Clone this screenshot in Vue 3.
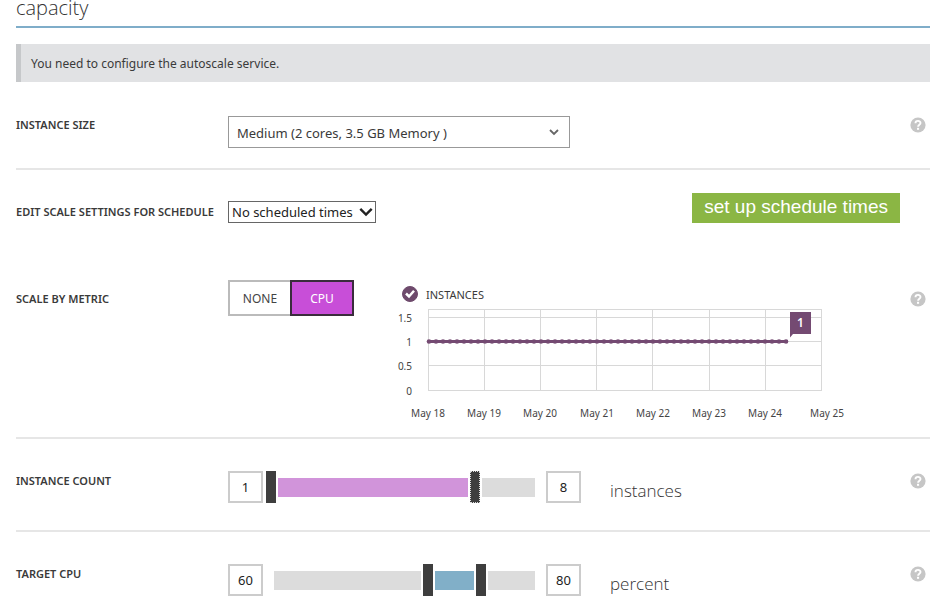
<script setup>
import { ref, computed } from 'vue'

const size = ref('medium')
const schedule = ref('none')
const metric = ref('CPU')
const showInstances = ref(true)

const count = ref({ low: 1, high: 8 })
const cpu = ref({ low: 60, high: 80 })

const sliders = computed(() => [
  { id: 'count', label: 'Instance count', unit: 'instances', tone: 'violet', min: 1, max: 10, model: count.value, active: true },
  { id: 'cpu', label: 'Target CPU', unit: 'percent', tone: 'blue', min: 0, max: 100, model: cpu.value, active: false }
])

function percent(slider, value) {
  return ((value - slider.min) / (slider.max - slider.min)) * 100
}

function fillStyle(slider) {
  const from = percent(slider, slider.model.low)
  const to = percent(slider, slider.model.high)
  return { marginLeft: from + '%', width: to - from + '%' }
}

const days = [18, 19, 20, 21, 22, 23, 24, 25].map((d, i) => ({
  text: 'May ' + d,
  line: Math.floor(38 + i * 56.2) + 0.5,
  x: d === 25 ? 437 : Math.round(38 + i * 56.2)
}))
const levels = [
  { text: '1.5', y: 14 },
  { text: '1', y: 38 },
  { text: '0.5', y: 62 },
  { text: '0', y: 87 }
]
const points = Array.from({ length: 52 }, (_, i) => 39 + i * 7)
</script>

<template>
  <main class="page">
    <h1 class="title">capacity</h1>
    <p class="notice">You need to configure the autoscale service.</p>

    <section class="row size-row">
      <label class="name" for="size">Instance size</label>
      <div class="field">
        <span class="picker large">
          <select id="size" v-model="size">
            <option value="medium">Medium (2 cores, 3.5 GB Memory )</option>
            <option value="small">Small (1 core, 1.75 GB Memory )</option>
          </select>
          <svg class="arrow" width="10" height="8" viewBox="0 0 10 8" aria-hidden="true">
            <path d="M1 2 L5 6 L9 2" fill="none" stroke="#666" stroke-width="1.8" />
          </svg>
        </span>
      </div>
      <button class="help" type="button" aria-label="Help">
        <svg width="16" height="16" viewBox="0 0 16 16"><circle cx="8" cy="8" r="7.6" fill="#c6c6c6" /><path d="M5.5 6.2 C5.5 3.2 10.5 3.2 10.5 6 C10.5 7.8 8.1 7.7 8.1 9.7" fill="none" stroke="#fff" stroke-width="1.9" /><rect x="7" y="10.8" width="2.1" height="2" fill="#fff" /></svg>
      </button>
    </section>

    <section class="row schedule-row">
      <label class="name" for="schedule">Edit scale settings for schedule</label>
      <div class="field spread">
        <span class="picker compact">
          <select id="schedule" v-model="schedule">
            <option value="none">No scheduled times</option>
          </select>
          <svg class="arrow" width="14" height="10" viewBox="0 0 14 10" aria-hidden="true">
            <path d="M1.3 1.8 L7 7.5 L12.7 1.8" fill="none" stroke="#222" stroke-width="2.4" />
          </svg>
        </span>
        <button class="setup" type="button">set up schedule times</button>
      </div>
    </section>

    <section class="row metric-row">
      <span class="name">Scale by metric</span>
      <div class="field">
        <div class="toggle">
          <button
            v-for="m in ['NONE', 'CPU']"
            :key="m"
            type="button"
            :class="{ on: metric === m }"
            :aria-pressed="metric === m"
            @click="metric = m"
          >{{ m }}</button>
        </div>
        <div class="chart">
          <label class="legend">
            <span class="tick">
              <input v-model="showInstances" type="checkbox" />
              <svg v-if="showInstances" width="16" height="16" viewBox="0 0 16 16" aria-hidden="true">
                <path d="M4 7.5 L7 10.5 L12 4.8" fill="none" stroke="#fff" stroke-width="2.5" />
              </svg>
            </span>
            INSTANCES
          </label>
          <svg class="plot" width="460" height="120" viewBox="0 0 460 120">
            <g fill="none" stroke="#d8d8d8">
              <path d="M38 5.5 H432" />
              <line v-for="l in levels" :key="l.text" x1="38" x2="432" :y1="l.y - 0.5" :y2="l.y - 0.5" />
              <line v-for="d in days" :key="d.text" :x1="d.line" :x2="d.line" y1="5" y2="87" />
            </g>
            <g class="axis" text-anchor="end">
              <text v-for="l in levels" :key="l.text" x="22" :y="l.y + 4">{{ l.text }}</text>
            </g>
            <g class="axis" text-anchor="middle">
              <text v-for="d in days" :key="d.text" :x="d.x" y="113">{{ d.text }}</text>
            </g>
            <g v-if="showInstances" fill="#744a72">
              <rect x="38" y="36" width="360" height="3" />
              <circle v-for="p in points" :key="p" :cx="p" cy="37.5" r="2.3" />
              <path d="M400 8 H421 V30 H403 L400 33.5 Z" />
              <text class="flag" x="410.5" y="23" text-anchor="middle">1</text>
            </g>
          </svg>
        </div>
      </div>
      <button class="help" type="button" aria-label="Help">
        <svg width="16" height="16" viewBox="0 0 16 16"><circle cx="8" cy="8" r="7.6" fill="#c6c6c6" /><path d="M5.5 6.2 C5.5 3.2 10.5 3.2 10.5 6 C10.5 7.8 8.1 7.7 8.1 9.7" fill="none" stroke="#fff" stroke-width="1.9" /><rect x="7" y="10.8" width="2.1" height="2" fill="#fff" /></svg>
      </button>
    </section>

    <section v-for="s in sliders" :key="s.id" class="row slider-row">
      <label class="name" :for="s.id + '-low'">{{ s.label }}</label>
      <div class="field">
        <input :id="s.id + '-low'" v-model.number="s.model.low" class="number" type="text" />
        <div class="slider">
          <div class="track"><div class="range"><div class="fill" :class="s.tone" :style="fillStyle(s)"></div></div></div>
          <input v-model.number="s.model.low" type="range" :min="s.min" :max="s.max" :aria-label="s.label + ' minimum'" />
          <input v-model.number="s.model.high" type="range" :class="{ active: s.active }" :min="s.min" :max="s.max" :aria-label="s.label + ' maximum'" />
        </div>
        <input v-model.number="s.model.high" class="number" type="text" :aria-label="s.label + ' maximum value'" />
        <span class="unit">{{ s.unit }}</span>
      </div>
      <button class="help" type="button" aria-label="Help">
        <svg width="16" height="16" viewBox="0 0 16 16"><circle cx="8" cy="8" r="7.6" fill="#c6c6c6" /><path d="M5.5 6.2 C5.5 3.2 10.5 3.2 10.5 6 C10.5 7.8 8.1 7.7 8.1 9.7" fill="none" stroke="#fff" stroke-width="1.9" /><rect x="7" y="10.8" width="2.1" height="2" fill="#fff" /></svg>
      </button>
    </section>
  </main>
</template>

<style>
body {
  background: #fff;
}
</style>

<style scoped>
.page {
  padding: 0 6px 0 16px;
  font-family: "Noto Sans", "Open Sans", sans-serif;
  font-size: 13px;
  color: #3a3a3a;
}
.page *,
.page {
  box-sizing: border-box;
}
button,
input,
select {
  font: inherit;
  color: inherit;
  margin: 0;
}
.title {
  margin: 0;
  padding-bottom: 10px;
  border-bottom: 2px solid #7fadc9;
  font-family: "Open Sans", sans-serif;
  font-size: 20px;
  line-height: 16px;
  font-weight: 300;
  color: #333;
}
.notice {
  margin: 16px 0 0;
  padding: 11px 10px 9px;
  border-left: 5px solid #c6c8ca;
  background: #e1e2e4;
  font-size: 12px;
  line-height: 18px;
}
.row {
  display: grid;
  grid-template-columns: 212px 1fr 20px;
  align-items: start;
  border-bottom: 2px solid #e6e6e6;
}
.name {
  font-size: 11px;
  line-height: 16px;
  font-weight: 600;
  text-transform: uppercase;
  white-space: nowrap;
}
.field {
  display: flex;
  align-items: flex-start;
  min-width: 0;
}
.spread {
  justify-content: space-between;
}
.help {
  width: 16px;
  height: 16px;
  padding: 0;
  border: 0;
  background: none;
}
.help svg {
  display: block;
}
.size-row {
  padding: 34px 0 20px;
}
.size-row .name,
.size-row .help {
  margin-top: 1px;
}
.picker {
  display: grid;
  align-items: center;
}
.picker select,
.picker .arrow {
  grid-area: 1 / 1;
}
.picker select {
  appearance: none;
  border: 1px solid #999;
  border-radius: 0;
  background: #fff;
}
.picker .arrow {
  justify-self: end;
  pointer-events: none;
}
.large {
  width: 342px;
}
.large select {
  height: 32px;
  padding: 2px 8px 0;
}
.large .arrow {
  margin-right: 11px;
}
.compact {
  width: 148px;
  margin-top: 8px;
}
.compact select {
  height: 22px;
  padding: 0 3px;
  border-color: #666;
  color: #222;
}
.compact .arrow {
  margin-right: 3px;
}
.schedule-row {
  padding: 23px 0 0;
  border-bottom: 0;
}
.schedule-row .name {
  margin-top: 11px;
}
.setup {
  height: 30px;
  margin-right: 10px;
  padding: 0 12px 2px;
  border: 0;
  background: #8bb644;
  color: #fff;
  font-family: "Liberation Sans", sans-serif;
  font-size: 19px;
  line-height: 28px;
}
.metric-row {
  padding: 57px 0 13px;
}
.metric-row .name,
.metric-row .help {
  margin-top: 11px;
}
.toggle {
  display: flex;
  width: 126px;
}
.toggle button {
  flex: 1;
  height: 36px;
  padding: 0;
  border: 2px solid #bbb;
  background: #fff;
  font-size: 12px;
  color: #444;
}
.toggle button:first-child {
  border-right-width: 0;
}
.toggle button.on {
  border: 2px solid #3a2c3c;
  background: #c84ed8;
  color: #fff;
}
.chart {
  margin-left: 36px;
  padding-top: 6px;
}
.legend {
  display: flex;
  align-items: center;
  gap: 8px;
  height: 16px;
  padding-left: 12px;
  font-size: 11px;
}
.tick {
  display: grid;
}
.tick > * {
  grid-area: 1 / 1;
}
.tick input {
  appearance: none;
  width: 16px;
  height: 16px;
  border: 1px solid #6e4a6c;
  border-radius: 50%;
}
.tick input:checked {
  background: #6e4a6c;
}
.tick svg {
  pointer-events: none;
}
.plot {
  display: block;
  margin-top: 2px;
}
.axis {
  font-size: 10px;
  fill: #444;
}
.flag {
  font-size: 12px;
  font-weight: 600;
  fill: #fff;
}
.slider-row {
  padding: 32px 0 27px;
}
.slider-row:last-child {
  border-bottom: 0;
  padding-bottom: 0;
}
.slider-row .name,
.slider-row .help {
  margin-top: 2px;
}
.number {
  width: 35px;
  height: 32px;
  padding: 0;
  border: 2px solid #ccc;
  border-radius: 0;
  background: #fff;
  text-align: center;
  color: #222;
}
.slider {
  display: grid;
  align-items: center;
  width: 272px;
  height: 32px;
  margin: 0 8px 0 3px;
}
.slider > * {
  grid-area: 1 / 1;
}
.track {
  height: 19px;
  margin: 0 3px 0 8px;
  background: #dcdcdc;
}
.range {
  height: 19px;
  margin: 0 2px 0 -3px;
}
.fill {
  height: 19px;
}
.violet {
  background: #d194da;
}
.blue {
  background: #81afc8;
}
.slider input {
  appearance: none;
  width: 100%;
  height: 32px;
  background: none;
  pointer-events: none;
}
.slider input::-webkit-slider-thumb {
  appearance: none;
  width: 10px;
  height: 32px;
  border-radius: 0;
  background: #3e3e3e;
  box-shadow: 0 0 0 2px #fff;
  pointer-events: auto;
}
.slider input.active::-webkit-slider-thumb {
  border: 1px dotted #ddd;
}
.unit {
  margin-left: 29px;
  padding-top: 8px;
  font-family: "Open Sans", sans-serif;
  font-size: 17px;
  line-height: 24px;
  font-weight: 300;
  color: #333;
}
</style>
